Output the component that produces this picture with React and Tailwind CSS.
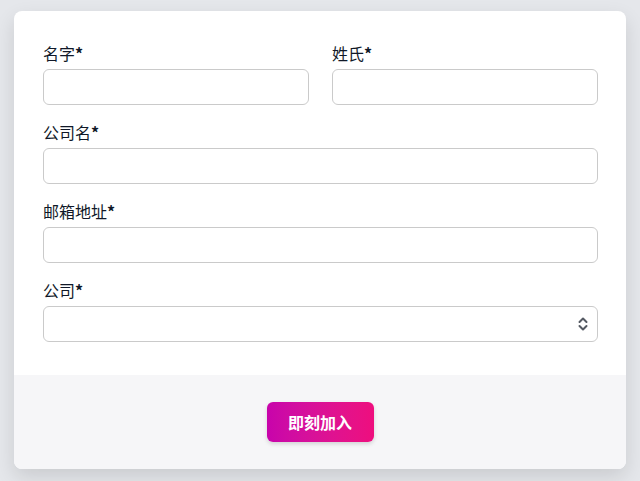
import React from "react";

function Field({ label, children }) {
  return (
    <div className="flex flex-col">
      <label className="h-6 mb-1 text-base leading-6 text-gray-900">
        {label}
        <span className="font-bold">*</span>
      </label>
      {children}
    </div>
  );
}

export default function App() {
  return (
    <div
      className="min-h-[481px] bg-[#e5e7eb] pt-[11px] pl-[14px] pr-[14px] pb-3"
      style={{ fontFamily: '"Noto Sans CJK SC", "Noto Sans", sans-serif' }}
    >
      <div className="bg-white rounded-lg overflow-hidden shadow-[0_8px_20px_rgba(0,0,0,0.12)]">
        <div className="pt-[30px] pb-[33px] pl-[29px] pr-[28px] flex flex-col gap-[15px]">
          <div className="grid grid-cols-2 gap-[23px]">
            <Field label="名字">
              <input className="h-9 w-full rounded-md border border-[#cacaca] px-3 outline-none" />
            </Field>
            <Field label="姓氏">
              <input className="h-9 w-full rounded-md border border-[#cacaca] px-3 outline-none" />
            </Field>
          </div>
          <Field label="公司名">
            <input className="h-9 w-full rounded-md border border-[#cacaca] px-3 outline-none" />
          </Field>
          <Field label="邮箱地址">
            <input className="h-9 w-full rounded-md border border-[#cacaca] px-3 outline-none" />
          </Field>
          <Field label="公司">
            <div className="relative h-9">
              <select className="appearance-none h-9 w-full rounded-md border border-[#cacaca] bg-white px-3 outline-none">
                <option></option>
              </select>
              <svg
                className="absolute right-[8px] top-[10px] pointer-events-none"
                width="14"
                height="16"
                viewBox="0 0 14 16"
                fill="none"
                stroke="#555a63"
                strokeWidth="2"
                strokeLinecap="round"
                strokeLinejoin="round"
              >
                <path d="M3.5 6 L7 2.5 L10.5 6" />
                <path d="M3.5 10 L7 13.5 L10.5 10" />
              </svg>
            </div>
          </Field>
        </div>
        <div className="bg-[#f6f6f8] h-[94px] flex items-center justify-center">
          <button className="h-10 w-[107px] rounded-md text-white font-bold text-base bg-gradient-to-r from-[#c803ab] to-[#ee0e7e] shadow-[0_2px_4px_rgba(0,0,0,0.15)]">
            即刻加入
          </button>
        </div>
      </div>
    </div>
  );
}
